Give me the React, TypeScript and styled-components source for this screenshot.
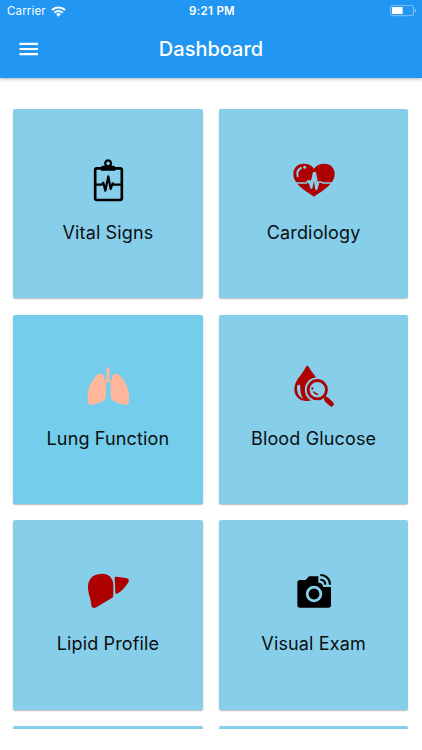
import React from "react";
import styled, { createGlobalStyle } from "styled-components";

const GlobalStyle = createGlobalStyle`
  * { box-sizing: border-box; }
  html, body { margin: 0; padding: 0; background: #fff; overflow: hidden; }
  body { font-family: Inter, "Liberation Sans", sans-serif; }
`;

const Screen = styled.div`
  width: 422px;
  height: 750px;
  display: flex;
  flex-direction: column;
  background: #fff;
`;

const Header = styled.header`
  flex: none;
  height: 77.5px;
  background: #2196f3;
  color: #fff;
  box-shadow: 0 1px 4px rgba(0, 0, 0, 0.22), 0 1px 3px rgba(0, 0, 0, 0.1);
`;

const StatusBar = styled.div`
  height: 22px;
  padding: 0 5px 0 7px;
  display: grid;
  grid-template-columns: 1fr auto 1fr;
  align-items: center;
  font-size: 11.5px;
  line-height: 22px;
`;

const Carrier = styled.div`
  display: flex;
  align-items: center;
  gap: 5px;
  letter-spacing: 0.15px;
`;

const Clock = styled.div`
  font-weight: 600;
  font-size: 11.5px;
  letter-spacing: 0.3px;
`;

const Battery = styled.svg`
  justify-self: end;
  display: block;
`;

const Toolbar = styled.div`
  height: 54px;
  padding: 0 19px;
  display: grid;
  grid-template-columns: 40px 1fr 40px;
  align-items: center;
`;

const MenuButton = styled.button`
  padding: 0;
  border: 0;
  background: none;
  color: #fff;
  display: flex;
`;

const Title = styled.h1`
  margin: 0;
  text-align: center;
  font-size: 20px;
  line-height: 24px;
  font-weight: 500;
`;

const Scroller = styled.main`
  height: 651.5px;
  padding: 31.5px 13.2px 0;
  overflow: hidden;
`;

const Grid = styled.div`
  display: grid;
  grid-template-columns: 189.5px 189.5px;
  grid-auto-rows: 189.4px;
  gap: 16.3px 16.2px;
`;

const Card = styled.section<{ $active?: boolean }>`
  padding-top: 41px;
  display: flex;
  flex-direction: column;
  align-items: center;
  border-radius: 2px;
  background: ${(p) => (p.$active ? "#73cdeb" : "#87ceeb")};
  box-shadow: 0 1px 1.5px rgba(0, 0, 0, 0.28);
`;

const Glyph = styled.svg<{ $color: string }>`
  flex: none;
  display: block;
  color: ${(p) => p.$color};
`;

const Label = styled.span`
  margin-top: 11px;
  font-size: 18px;
  line-height: 24px;
  letter-spacing: 0.15px;
  color: #0b0f11;
  white-space: nowrap;
`;

const SKY = "#87ceeb";

const clipboard = (
  <g>
    <rect x="45.5" y="55" width="80" height="95" rx="5" fill="none" stroke="currentColor" strokeWidth="8" />
    <path d="M63 52q0-5 5-5h6c-4-9 1-19 10.500-19S99 38 95 47h6q5 0 5 5v10H63z" fill="currentColor" />
    <circle cx="84.500" cy="40" r="5.500" fill={SKY} />
    <path d="M47 104h18l5-6 6 24 9-43 7 38 6-17 4 4h21" fill="none" stroke="currentColor" strokeWidth="6.500" strokeLinejoin="round" />
  </g>
);

const heart = (
  <g>
    <path d="M86 140C62 123 24 103 24 72c0-19 13-31 31-31 14 0 24 5 31 15 7-10 17-15 31-15 18 0 31 12 31 31 0 31-38 51-62 68z" fill="currentColor" />
    <path d="M20 99h43l4-6h7l3 10 8-35h5l7 36 4-8h7l4 3h41" fill="none" stroke={SKY} strokeWidth="4.500" />
    <path d="M68 98l5-3 5 18 8-41 7 45 5-16" fill="none" stroke={SKY} strokeWidth="7" strokeLinejoin="round" />
    <path d="M37 79c-3-12 0-20 10-25" fill="none" stroke={SKY} strokeWidth="6" strokeLinecap="round" />
    <circle cx="58" cy="52" r="4.500" fill={SKY} />
  </g>
);

const lungs = (
  <g fill="currentColor">
    <path d="M74 65c-2-11-13-15-22-8-16 14-28 38-29 63-1 18 1 28 10 27 15-3 45-8 45-26V82l-4-4z" />
    <path d="M96 65c2-11 13-15 22-8 16 14 28 38 29 63 1 18-1 28-10 27-15-3-45-8-45-26V82l4-4z" />
    <path d="M80 38q0-5 4.500-5t4.500 5v31l9 9-4 6-9.500-8-9.500 8-4-6 9-9z" />
  </g>
);

const glucose = (
  <g>
    <path d="M66 29q-3 0-5 5C51 56 27 74 27 99c0 22 16 36 37 36 25 0 42-15 42-38 0-24-25-42-35-63q-2-5-5-5z" fill="currentColor" />
    <path d="M35 92c-1 17 5 30 19 36-9-11-9-25-9-37-1-6-9-6-10 1z" fill={SKY} />
    <circle cx="96" cy="101" r="37.500" fill={SKY} />
    <circle cx="96" cy="101" r="27.500" fill={SKY} stroke="currentColor" strokeWidth="8.500" />
    <path d="M115 120l10 10" stroke="currentColor" strokeWidth="8" />
    <path d="M124 131l14 13" stroke="currentColor" strokeWidth="15" strokeLinecap="round" />
    <path d="M81 94v7M85 107c3 5 7 8 13 9" fill="none" stroke="currentColor" strokeWidth="5" />
  </g>
);

const liver = (
  <g fill="currentColor">
    <path d="M60 39c23-3 40 10 40 34v29c0 5-2 8-6 10l-45 27c-7 4-14 2-15-6-1-18-9-32-10-51-1-26 12-41 36-43z" />
    <path d="M104 52c0-4 2-5 6-5l27 4c9 1 12 6 8 13-9 15-20 28-34 34-4 1-5 0-5-4z" />
  </g>
);

const camera = (
  <g fill="none" stroke="currentColor">
    <path d="M44 57h17l7-8q2-3 5-3h26v19c9 0 14 5 15 13h23v54q0 8-8 8H44q-8 0-8-8V65q0-8 8-8z" fill="currentColor" stroke="none" />
    <circle cx="86" cy="99" r="20.500" stroke={SKY} strokeWidth="8.500" />
    <path d="M105 42c17 0 29 12 29 29M105 56c9 0 15 6 15 15" strokeWidth="6" />
  </g>
);

const items = [
  { label: "Vital Signs", color: "#000", art: clipboard, left: 0 },
  { label: "Cardiology", color: "#ae0000", art: heart, left: 2 },
  { label: "Lung Function", color: "#ffb69b", art: lungs, left: 0, active: true },
  { label: "Blood Glucose", color: "#ae0000", art: glucose, left: 2 },
  { label: "Lipid Profile", color: "#ae0000", art: liver, left: 0 },
  { label: "Visual Exam", color: "#000", art: camera, left: 2 },
];

export default function App() {
  return (
    <Screen>
      <GlobalStyle />
      <Header>
        <StatusBar>
          <Carrier>
            Carrier
            <svg width="15" height="11" viewBox="0 0 15 11" fill="none" stroke="#fff" strokeWidth="2.100">
              <path d="M.9 4.100a9.500 9.500 0 0 1 13.200 0M3.400 6.700a5.800 5.800 0 0 1 8.200 0" />
              <path d="M5.100 8.300a3.400 3.400 0 0 1 4.800 0L7.500 10.700z" fill="#fff" stroke="none" />
            </svg>
          </Carrier>
          <Clock>9:21 PM</Clock>
          <Battery width="27" height="12" viewBox="0 0 27 12">
            <rect x=".6" y=".3" width="23" height="10.400" rx="2.500" fill="none" stroke="#fff" strokeOpacity=".45" />
            <rect x="2" y="2" width="10.700" height="7" rx=".8" fill="#fff" />
            <path d="M25 3.700c1.800.6 1.800 3 0 3.600z" fill="#fff" fillOpacity=".5" />
          </Battery>
        </StatusBar>
        <Toolbar>
          <MenuButton aria-label="Open menu">
            <svg width="20" height="14" viewBox="0 0 20 14" fill="currentColor">
              <path d="M.5.700h18.500v2.200H.5zM.5 5.900h18.500v2.200H.5zM.5 11.100h18.500v2.200H.5z" />
            </svg>
          </MenuButton>
          <Title>Dashboard</Title>
        </Toolbar>
      </Header>
      <Scroller>
        <Grid>
          {items.map((item) => (
            <Card key={item.label} $active={item.active}>
              <Glyph $color={item.color} width="56" height="60" viewBox={`${item.left} 0 168 180`}>
                {item.art}
              </Glyph>
              <Label>{item.label}</Label>
            </Card>
          ))}
          <Card />
          <Card />
        </Grid>
      </Scroller>
    </Screen>
  );
}
